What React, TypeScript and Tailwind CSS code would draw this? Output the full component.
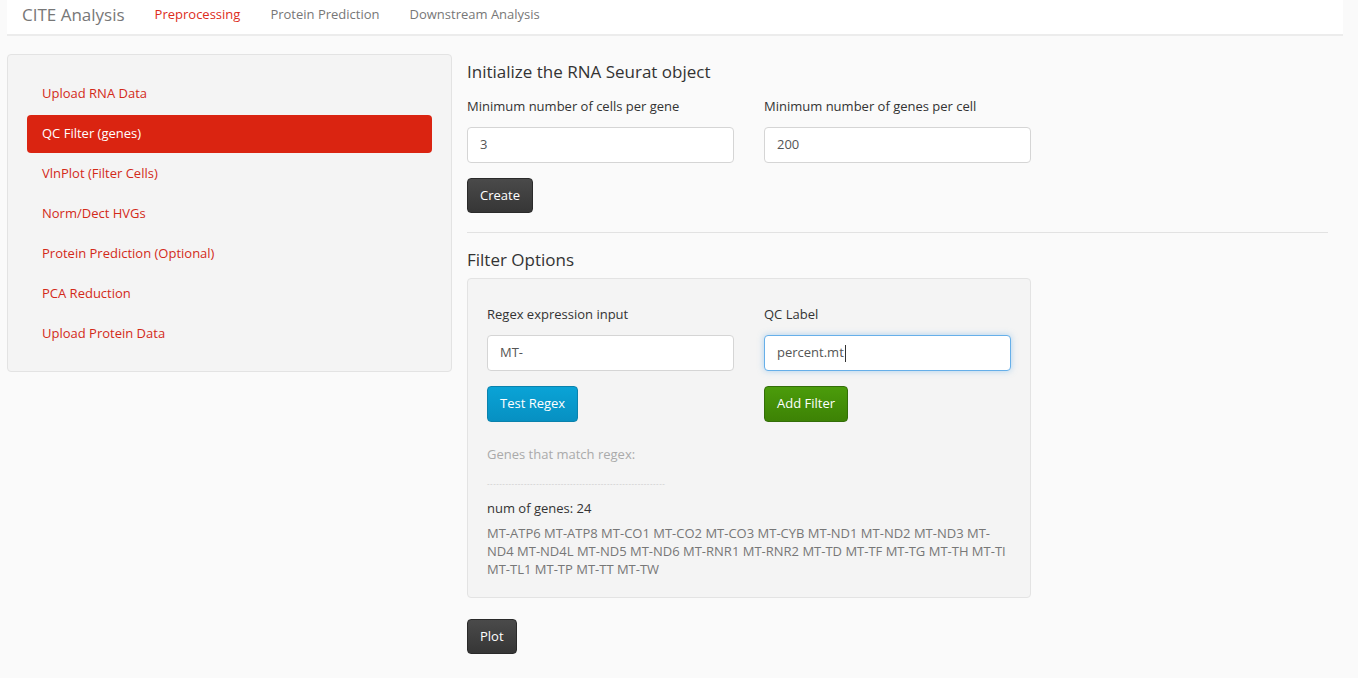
import React from "react";

const pills = [
  "Upload RNA Data",
  "QC Filter (genes)",
  "VlnPlot (Filter Cells)",
  "Norm/Dect HVGs",
  "Protein Prediction (Optional)",
  "PCA Reduction",
  "Upload Protein Data",
];

export default function App() {
  return (
    <div
      className="min-h-[678px] w-full bg-[#fafafa] px-[7px] text-[13px] text-[#333]"
      style={{ fontFamily: '"Open Sans", "Noto Sans", sans-serif' }}
    >
      {/* Navbar */}
      <div className="flex h-[36px] w-[1336px] items-center border-b-2 border-[#ececec] bg-white pb-[4px]">
        <div className="pl-[15px] pr-[30px] text-[17px] text-[#777]">CITE Analysis</div>
        <div className="px-0 text-[#dd2c1b]">Preprocessing</div>
        <div className="pl-[30px] text-[#777]">Protein Prediction</div>
        <div className="pl-[30px] text-[#777]">Downstream Analysis</div>
      </div>

      <div className="mt-[18px] flex gap-[15px]">
        {/* Sidebar */}
        <div className="w-[445px] self-start rounded-[4px] border border-[#e3e3e3] bg-[#f4f4f4] px-[19px] pb-[18px] pt-[20px]">
          <div className="flex flex-col gap-[2px]">
            {pills.map((p, i) => (
              <div
                key={p}
                className={
                  i === 1
                    ? "flex h-[38px] items-center rounded-[4px] bg-[#da2411] px-[15px] text-white"
                    : "flex h-[38px] items-center px-[15px] text-[#d32a19]"
                }
              >
                {p}
              </div>
            ))}
          </div>
        </div>

        {/* Main */}
        <div className="w-[861px]">
          <div className="mt-[8px] h-[20px] text-[17px] leading-[20px] text-[#333]">
            Initialize the RNA Seurat object
          </div>
          <div className="mt-[15px] grid grid-cols-[267px_267px] gap-x-[30px]">
            <div className="h-[18px] leading-[18px]">Minimum number of cells per gene</div>
            <div className="h-[18px] leading-[18px]">Minimum number of genes per cell</div>
            <div className="mt-[12px] flex h-[36px] items-center rounded-[4px] border border-[#d5d5d5] bg-white px-[12px] text-[#555]">
              3
            </div>
            <div className="mt-[12px] flex h-[36px] items-center rounded-[4px] border border-[#d5d5d5] bg-white px-[12px] text-[#555]">
              200
            </div>
          </div>
          <button className="mt-[15px] flex h-[35px] items-center rounded-[4px] border border-[#2a2a2a] bg-gradient-to-b from-[#4a4a4a] to-[#363636] px-[12px] text-white">
            Create
          </button>
          <div className="mt-[19px] border-t border-[#e2e2e2]" />
          <div className="mt-[17px] h-[20px] text-[17px] leading-[20px] text-[#333]">Filter Options</div>

          {/* Well */}
          <div className="mt-[8px] w-[564px] rounded-[4px] border border-[#e3e3e3] bg-[#f4f4f4] px-[19px] pb-[19px] pt-[26px]">
            <div className="grid grid-cols-[247px_247px] gap-x-[30px]">
              <div className="h-[18px] leading-[18px]">Regex expression input</div>
              <div className="h-[18px] leading-[18px]">QC Label</div>
              <div className="mt-[12px] flex h-[36px] items-center rounded-[4px] border border-[#d5d5d5] bg-white px-[12px] text-[#555]">
                MT-
              </div>
              <div className="mt-[12px] flex h-[36px] items-center rounded-[4px] border border-[#66afe9] bg-white px-[12px] text-[#555] shadow-[0_0_6px_rgba(102,175,233,0.5)]">
                percent.mt<span className="ml-[1px] inline-block h-[17px] w-[1px] bg-[#333]" />
              </div>
              <div className="mt-[15px]">
                <button className="flex h-[36px] items-center rounded-[4px] border border-[#0a82ad] bg-gradient-to-b from-[#0aa3d6] to-[#0790c2] px-[12px] text-white">
                  Test Regex
                </button>
              </div>
              <div className="mt-[15px]">
                <button className="flex h-[36px] items-center rounded-[4px] border border-[#336e08] bg-gradient-to-b from-[#4b9c0b] to-[#3d8205] px-[12px] text-white">
                  Add Filter
                </button>
              </div>
            </div>
            <div className="mt-[23px] h-[18px] leading-[18px] text-[#aaa]">Genes that match regex:</div>
            <div className="mt-[11px] h-[18px] whitespace-nowrap text-[8px] leading-[18px] tracking-[0.5px] text-[#c8c8c8]">
              ----------------------------------------------------------
            </div>
            <div className="mt-[7px] h-[18px] leading-[18px] text-[#333]">num of genes: 24</div>
            <div className="mt-[7px] leading-[18px] text-[#777]">
              <div>MT-ATP6 MT-ATP8 MT-CO1 MT-CO2 MT-CO3 MT-CYB MT-ND1 MT-ND2 MT-ND3 MT-</div>
              <div>ND4 MT-ND4L MT-ND5 MT-ND6 MT-RNR1 MT-RNR2 MT-TD MT-TF MT-TG MT-TH MT-TI</div>
              <div>MT-TL1 MT-TP MT-TT MT-TW</div>
            </div>
          </div>

          <button className="mt-[21px] flex h-[35px] items-center rounded-[4px] border border-[#2a2a2a] bg-gradient-to-b from-[#4a4a4a] to-[#363636] px-[12px] text-white">
            Plot
          </button>
        </div>
      </div>
    </div>
  );
}
